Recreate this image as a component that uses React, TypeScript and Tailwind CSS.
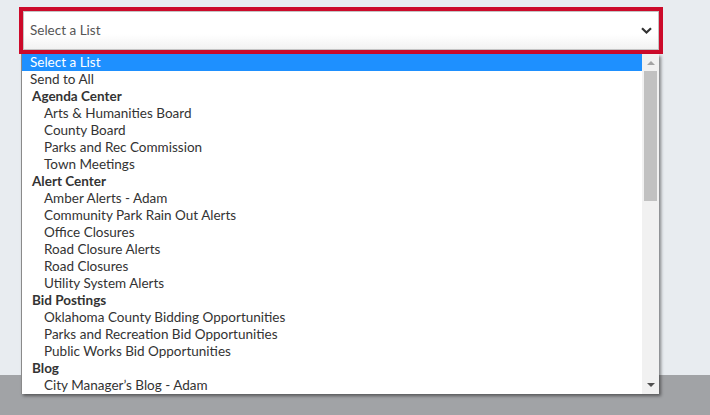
import React from 'react';

type Row = { label: string; kind: 'top' | 'group' | 'option'; selected?: boolean };

const rows: Row[] = [
  { label: 'Select a List', kind: 'top', selected: true },
  { label: 'Send to All', kind: 'top' },
  { label: 'Agenda Center', kind: 'group' },
  { label: 'Arts & Humanities Board', kind: 'option' },
  { label: 'County Board', kind: 'option' },
  { label: 'Parks and Rec Commission', kind: 'option' },
  { label: 'Town Meetings', kind: 'option' },
  { label: 'Alert Center', kind: 'group' },
  { label: 'Amber Alerts - Adam', kind: 'option' },
  { label: 'Community Park Rain Out Alerts', kind: 'option' },
  { label: 'Office Closures', kind: 'option' },
  { label: 'Road Closure Alerts', kind: 'option' },
  { label: 'Road Closures', kind: 'option' },
  { label: 'Utility System Alerts', kind: 'option' },
  { label: 'Bid Postings', kind: 'group' },
  { label: 'Oklahoma County Bidding Opportunities', kind: 'option' },
  { label: 'Parks and Recreation Bid Opportunities', kind: 'option' },
  { label: 'Public Works Bid Opportunities', kind: 'option' },
  { label: 'Blog', kind: 'group' },
  { label: 'City Manager’s Blog - Adam', kind: 'option' },
];

function Chevron() {
  return (
    <svg width="11" height="7" viewBox="0 0 11 7" className="text-[#333]">
      <path d="M1 1.2 L5.5 5.5 L10 1.2" fill="none" stroke="currentColor" strokeWidth="2.2" />
    </svg>
  );
}

function Scrollbar() {
  return (
    <div className="flex h-full w-[17px] flex-col items-center bg-[#f1f1f1]">
      <div className="flex h-[17px] w-full items-center justify-center">
        <svg width="8" height="5" viewBox="0 0 8 5">
          <path d="M0 5 L4 1 L8 5 Z" fill="#a3a3a3" />
        </svg>
      </div>
      <div className="h-[130px] w-[13px] bg-[#c1c1c1]" />
      <div className="flex-1" />
      <div className="flex h-[17px] w-full items-center justify-center">
        <svg width="8" height="5" viewBox="0 0 8 5">
          <path d="M0 0 L8 0 L4 4 Z" fill="#505050" />
        </svg>
      </div>
    </div>
  );
}

export default function App() {
  return (
    <div className="relative h-[415px] w-[710px] overflow-hidden font-['Lato',sans-serif]">
      <div className="h-[375px] bg-[#e8ecf0] pt-[7px] pl-[19px]">
        <div className="h-[47px] w-[644px] border-4 border-[#cc0a2a]">
          <div className="flex h-full items-center justify-between border border-[#c4c4c4] bg-gradient-to-b from-white from-60% to-[#f2f2f2] pl-[6px] pr-[6px]">
            <span className="text-[13.5px] text-[#555]">Select a List</span>
            <Chevron />
          </div>
        </div>
      </div>
      <div className="h-[40px] bg-[#a1a3a6]" />

      {/* open list */}
      <div className="absolute left-[21px] top-[54px] flex h-[340px] w-[638px] border-l border-[#8a8a8a] bg-white shadow-[2px_2px_3px_rgba(0,0,0,0.45)]">
        <ul className="flex-1 text-[13.5px] leading-[17px] text-[#333]">
          {rows.map((r) => (
            <li
              key={r.label}
              className={
                r.selected
                  ? 'h-[17px] bg-[#1e90ff] pl-[8px] text-white'
                  : r.kind === 'top'
                  ? 'h-[17px] pl-[8px]'
                  : r.kind === 'group'
                  ? 'h-[17px] pl-[10px] font-bold'
                  : 'h-[17px] pl-[22px]'
              }
            >
              {r.label}
            </li>
          ))}
        </ul>
        <Scrollbar />
      </div>
    </div>
  );
}
